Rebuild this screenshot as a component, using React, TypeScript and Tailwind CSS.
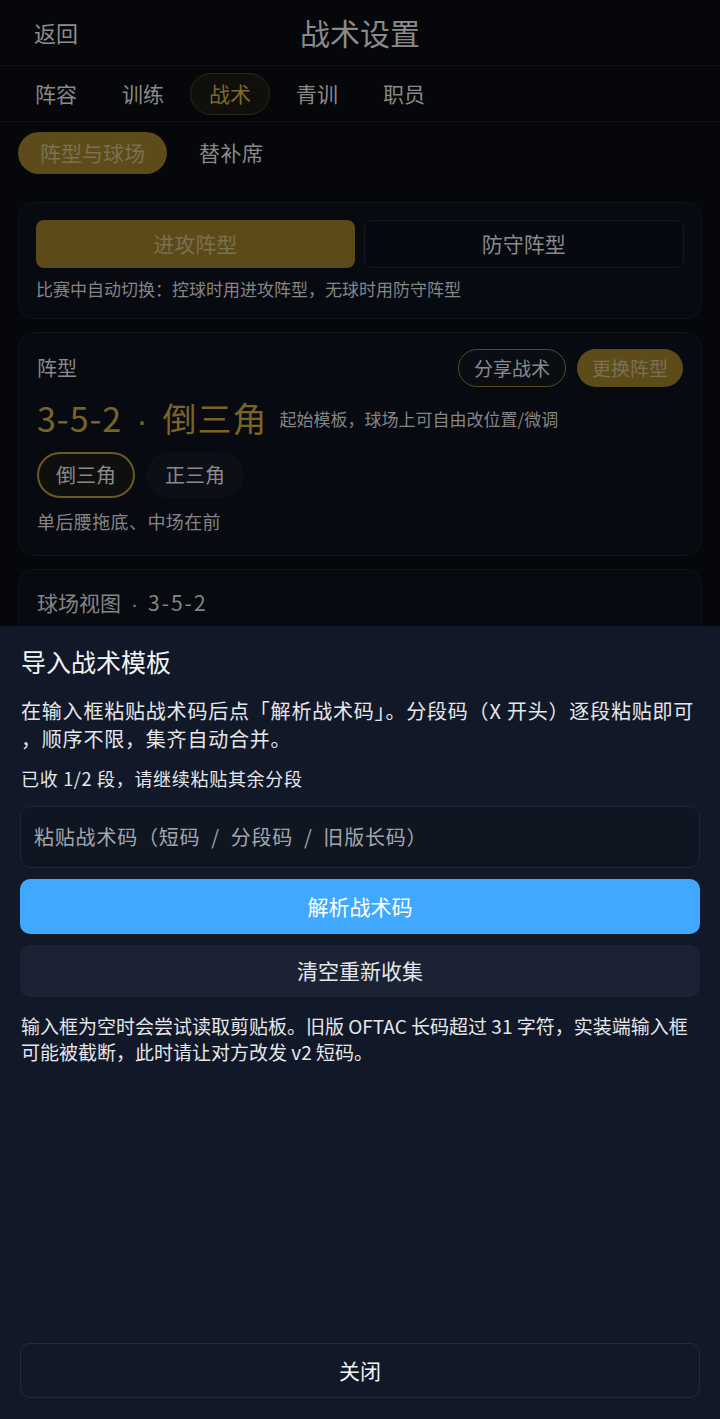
import React from "react";

const tabs = ["阵容", "训练", "战术", "青训", "职员"];

export default function App() {
  return (
    <div className="relative h-[1419px] w-[720px] overflow-hidden bg-[#05070b] font-['Noto_Sans_CJK_SC','Noto_Sans',sans-serif]">
      {/* Header */}
      <div className="relative flex h-[66px] items-center border-b border-[#0d1118] px-[34px]">
        <span className="text-[22px] text-[#8e8e8e]">返回</span>
        <span className="absolute left-1/2 -translate-x-1/2 text-[30px] text-[#8a8a8a]">战术设置</span>
      </div>
      {/* Tabs */}
      <div className="flex h-[56px] items-center gap-[7px] border-b border-[#0d1118] px-[16px]">
        {tabs.map((t) => (
          <div
            key={t}
            className={
              t === "战术"
                ? "flex h-[42px] items-center rounded-full border border-[#2c2716] bg-[#100f0c] px-[18px] text-[21px] text-[#7d6a2a]"
                : "flex h-[42px] items-center rounded-full border border-transparent px-[18px] text-[21px] text-[#8a8a8a]"
            }
          >
            {t}
          </div>
        ))}
      </div>
      {/* Sub tabs */}
      <div className="flex items-center gap-[10px] px-[18px] pt-[10px]">
        <div className="flex h-[42px] items-center rounded-full bg-[#5d4c1a] px-[22px] text-[21px] text-[#7b7153]">阵型与球场</div>
        <div className="flex h-[42px] items-center px-[22px] text-[21px] tracking-[0.5px] text-[#8a8a8a]">替补席</div>
      </div>

      <div className="flex flex-col px-[18px] pt-[28px]">
        {/* Card 1 */}
        <div className="rounded-[16px] border border-[#0f141c] bg-[#070a10] px-[17px] pt-[17px] pb-[17px]">
          <div className="flex gap-[9px]">
            <div className="flex h-[48px] flex-1 items-center justify-center rounded-[8px] bg-[#5c4b19] text-[21px] text-[#7a7052]">进攻阵型</div>
            <div className="flex h-[48px] flex-1 items-center justify-center rounded-[8px] border border-[#121822] bg-[#060910] text-[21px] text-[#8a8a8a]">防守阵型</div>
          </div>
          <div className="mt-[9px] text-[17px] leading-[24px] text-[#858585]">比赛中自动切换：控球时用进攻阵型，无球时用防守阵型</div>
        </div>

        {/* Card 2 */}
        <div className="mt-[13px] rounded-[16px] border border-[#0f141c] bg-[#070a10] px-[18px] pt-[16px] pb-[21px]">
          <div className="flex items-center justify-between">
            <span className="text-[20px] text-[#8a8a8a]">阵型</span>
            <div className="flex gap-[11px]">
              <div className="flex h-[38px] items-center rounded-full border border-[#594b1e] bg-[#0a0d14] px-[15px] text-[19px] text-[#8a8a8a]">分享战术</div>
              <div className="flex h-[38px] items-center rounded-full bg-[#5d4c1a] px-[15px] text-[19px] text-[#7b7153]">更换阵型</div>
            </div>
          </div>
          <div className="mt-[9px] flex items-center gap-[12px]">
            <span className="text-[34px] leading-[44px] tracking-[1px] text-[#7a6424]">
              3-5-2<span className="mx-[14px] font-['Liberation_Sans',sans-serif]">·</span>倒三角
            </span>
            <span className="text-[17px] text-[#858585]">起始模板，球场上可自由改位置/微调</span>
          </div>
          <div className="mt-[10px] flex gap-[11px]">
            <div className="flex h-[46px] items-center rounded-full border-2 border-[#6a5922] bg-[#0f0f0e] px-[17px] text-[20px] text-[#8a8a8a]">倒三角</div>
            <div className="flex h-[46px] items-center rounded-full bg-[#0b0f16] px-[19px] text-[20px] text-[#8a8a8a]">正三角</div>
          </div>
          <div className="mt-[10px] text-[18px] leading-[26px] tracking-[0.4px] text-[#858585]">单后腰拖底、中场在前</div>
        </div>

        {/* Card 3 */}
        <div className="mt-[13px] h-[120px] rounded-[16px] border border-[#0f141c] bg-[#070a10] px-[18px] pt-[17px]">
          <span className="text-[21px] text-[#858585]">
            球场视图<span className="mx-[10px] font-['Liberation_Sans',sans-serif]">·</span>
            <span className="tracking-[2px]">3-5-2</span>
          </span>
        </div>
      </div>

      {/* Bottom sheet */}
      <div className="absolute inset-x-0 top-[626px] bottom-0 flex flex-col bg-[#111827] px-[20px] pt-[15px] pb-[21px]">
        <div className="px-[1px] text-[25px] leading-[40px] text-[#f3f4f6]">导入战术模板</div>
        <div className="mt-[16px] px-[1px] text-[20px] leading-[28px] tracking-[0.8px] text-[#e5e7eb]">
          在输入框粘贴战术码后点「解析战术码」。分段码（X 开头）逐段粘贴即可
          <br />
          ，顺序不限，集齐自动合并。
        </div>
        <div className="mt-[12px] px-[1px] text-[18px] leading-[26px] tracking-[0.7px] text-[#e5e7eb]">已收 1/2 段，请继续粘贴其余分段</div>
        <div className="mt-[15px] flex h-[62px] items-center rounded-[10px] border border-[#1f2735] bg-[#0f1521] px-[13px] text-[20px] tracking-[0.8px] text-[#a3a6ad]">
          粘贴战术码（短码{"\u2002"}/{"\u2002"}分段码{"\u2002"}/{"\u2002"}旧版长码）
        </div>
        <div className="mt-[11px] flex h-[55px] items-center justify-center rounded-[10px] bg-[#40a8ff] text-[21px] text-white">解析战术码</div>
        <div className="mt-[11px] flex h-[52px] items-center justify-center rounded-[10px] bg-[#1a2233] text-[21px] text-[#e5e7eb]">清空重新收集</div>
        <div className="mt-[16px] whitespace-nowrap px-[1px] text-[19px] leading-[26px] text-[#e5e7eb]">
          输入框为空时会尝试读取剪贴板。旧版 OFTAC 长码超过 31 字符，实装端输入框
          <br />
          可能被截断，此时请让对方改发 v2 短码。
        </div>
        <div className="mt-auto flex h-[55px] items-center justify-center rounded-[10px] border border-[#222b3b] text-[21px] text-[#f3f4f6]">关闭</div>
      </div>
    </div>
  );
}
